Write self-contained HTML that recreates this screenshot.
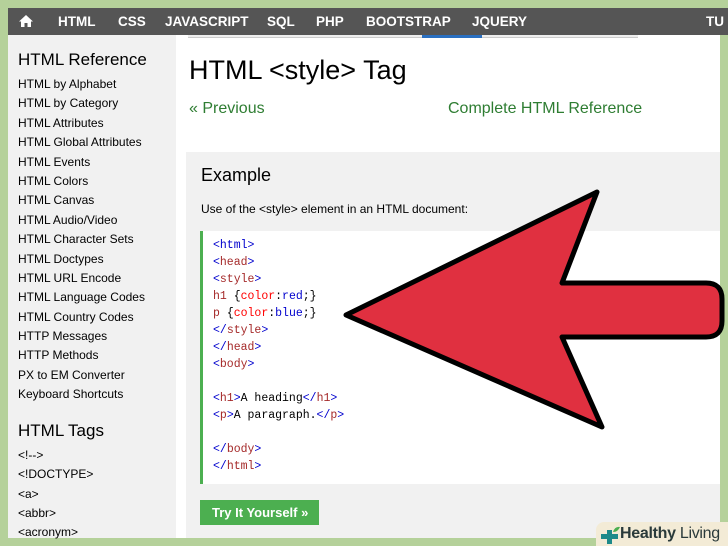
<!DOCTYPE html>
<html><head><style>
*{margin:0;padding:0;box-sizing:border-box}
html,body{width:728px;height:546px;overflow:hidden}
body{background:#b5d19a;position:relative;font-family:"Liberation Sans",sans-serif}
.abs{position:absolute}
#bar{left:8px;top:8px;width:720px;height:27px;background:#555;color:#fff;font-size:13.5px;font-weight:bold}
#bar span{position:absolute;top:6px}
#side{left:8px;top:35px;width:168px;height:503px;background:#f1f1f1}
#main{left:176px;top:35px;width:544px;height:503px;background:#fff}
.si{position:absolute;left:10px;font-size:12px;color:#000;white-space:nowrap}
.h{font-size:17px}
.code{font-family:"Liberation Mono",monospace;font-size:11.5px;position:absolute;left:213px;color:#000;white-space:nowrap}
.b{color:#0000cd}.r{color:#a52a2a}.rd{color:#ff0000}
</style></head><body>
<div id="bar" class="abs">
<svg style="position:absolute;left:10px;top:6px" width="16" height="14" viewBox="0 0 16 14"><path d="M8 1L1 7.5h2V13h3.5V9h3v4H13V7.5h2z" fill="#fff"/></svg>
<span style="left:50px">HTML</span><span style="left:110px">CSS</span><span style="left:157px">JAVASCRIPT</span><span style="left:259px">SQL</span><span style="left:308px">PHP</span><span style="left:358px">BOOTSTRAP</span><span style="left:464px">JQUERY</span><span style="left:698px">TU</span>
</div>
<div id="side" class="abs">
<div class="si h" style="top:15px">HTML Reference</div>
<div class="si" style="top:42px">HTML by Alphabet</div>
<div class="si" style="top:61px">HTML by Category</div>
<div class="si" style="top:81px">HTML Attributes</div>
<div class="si" style="top:100px">HTML Global Attributes</div>
<div class="si" style="top:120px">HTML Events</div>
<div class="si" style="top:139px">HTML Colors</div>
<div class="si" style="top:158px">HTML Canvas</div>
<div class="si" style="top:178px">HTML Audio/Video</div>
<div class="si" style="top:197px">HTML Character Sets</div>
<div class="si" style="top:217px">HTML Doctypes</div>
<div class="si" style="top:236px">HTML URL Encode</div>
<div class="si" style="top:255px">HTML Language Codes</div>
<div class="si" style="top:275px">HTML Country Codes</div>
<div class="si" style="top:294px">HTTP Messages</div>
<div class="si" style="top:313px">HTTP Methods</div>
<div class="si" style="top:333px">PX to EM Converter</div>
<div class="si" style="top:352px">Keyboard Shortcuts</div>
<div class="si h" style="top:386px">HTML Tags</div>
<div class="si" style="top:413px">&lt;!--&gt;</div>
<div class="si" style="top:432px">&lt;!DOCTYPE&gt;</div>
<div class="si" style="top:452px">&lt;a&gt;</div>
<div class="si" style="top:471px">&lt;abbr&gt;</div>
<div class="si" style="top:490px">&lt;acronym&gt;</div>
</div>
<div id="main" class="abs">
<div class="abs" style="left:12px;top:0;width:450px;height:3px;border-bottom:1px solid #ccc;background:#eee"></div>
<div class="abs" style="left:246px;top:0;width:60px;height:3px;background:#2a6fc0"></div>
<div class="abs" style="left:13px;top:20px;font-size:27px;color:#000;white-space:nowrap">HTML &lt;style&gt; Tag</div>
<div class="abs" style="left:13px;top:65px;font-size:16px;color:#2e7d32">« Previous</div>
<div class="abs" style="left:272px;top:65px;font-size:16px;color:#2e7d32;white-space:nowrap">Complete HTML Reference</div>
</div>
<div class="abs" style="left:186px;top:152px;width:534px;height:386px;background:#f1f1f1"></div>
<div class="abs" style="left:201px;top:165px;font-size:18px">Example</div>
<div class="abs" style="left:201px;top:202px;font-size:12px;white-space:nowrap">Use of the &lt;style&gt; element in an HTML document:</div>
<div class="abs" style="left:200px;top:231px;width:520px;height:253px;background:#fff;border-left:3px solid #4caf50"></div>
<div class="code b" style="top:239px">&lt;html&gt;</div>
<div class="code b" style="top:256px">&lt;<span class="r">head</span>&gt;</div>
<div class="code b" style="top:273px">&lt;<span class="r">style</span>&gt;</div>
<div class="code r" style="top:290px">h1 <span style="color:#000">{</span><span class="rd">color</span><span style="color:#000">:</span><span class="b">red</span><span style="color:#000">;}</span></div>
<div class="code r" style="top:307px">p <span style="color:#000">{</span><span class="rd">color</span><span style="color:#000">:</span><span class="b">blue</span><span style="color:#000">;}</span></div>
<div class="code b" style="top:324px">&lt;/<span class="r">style</span>&gt;</div>
<div class="code b" style="top:341px">&lt;/<span class="r">head</span>&gt;</div>
<div class="code b" style="top:358px">&lt;<span class="r">body</span>&gt;</div>
<div class="code b" style="top:392px">&lt;<span class="r">h1</span>&gt;<span style="color:#000">A heading</span>&lt;/<span class="r">h1</span>&gt;</div>
<div class="code b" style="top:409px">&lt;<span class="r">p</span>&gt;<span style="color:#000">A paragraph.</span>&lt;/<span class="r">p</span>&gt;</div>
<div class="code b" style="top:443px">&lt;/<span class="r">body</span>&gt;</div>
<div class="code b" style="top:460px">&lt;/<span class="r">html</span>&gt;</div>
<div class="abs" style="left:200px;top:500px;width:119px;height:25px;background:#4caf50;color:#fff;font-size:13px;font-weight:bold;padding:5px 0 0 12px;white-space:nowrap">Try It Yourself »</div>
<svg class="abs" style="left:0;top:0" width="728" height="546">
<path d="M346 315 L597 192 L562 283 L706 283 Q722 283 722 299 L722 321 Q722 337 706 337 L562 337 L602 427 Z" fill="#e03040" stroke="#000" stroke-width="5" stroke-linejoin="round"/>
</svg>
<div class="abs" style="left:596px;top:522px;width:132px;height:24px;background:#f3ebd6;border-radius:8px 0 0 0;font-size:16px;color:#2a3a3a;padding:3px 0 0 24px;white-space:nowrap;letter-spacing:-0.3px"><b>Healthy</b> Living</div>
<svg class="abs" style="left:600px;top:526px" width="22" height="18"><path d="M7 4h5v4h6v5h-6v5H7v-5H1V8h6z" fill="#1d8a8a"/><path d="M13 6q2-6 7-5-2 5-7 5z" fill="#4caf50"/></svg>
</body></html>
